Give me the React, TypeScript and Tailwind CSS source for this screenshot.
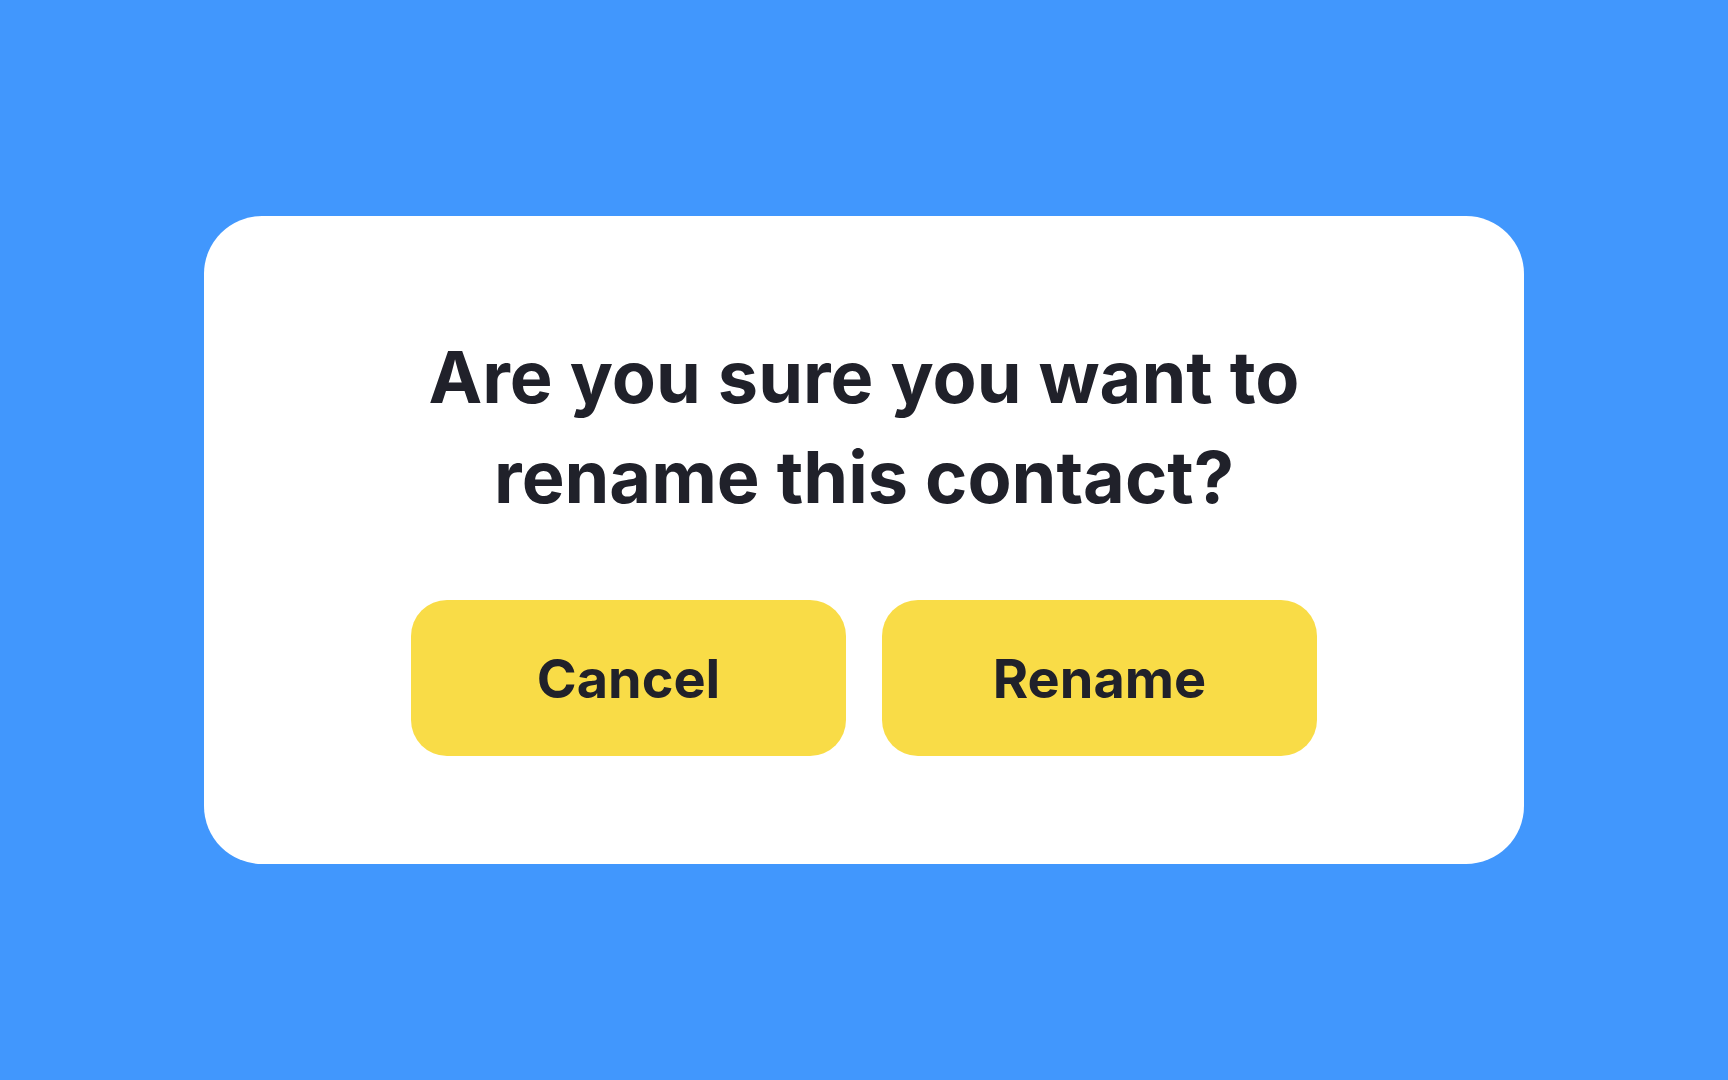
export default function App() {
  return (
    <div className="w-screen h-screen bg-[#4197fd] flex items-center justify-center font-['Inter',sans-serif]">
      <div className="w-[1320px] h-[648px] bg-white rounded-[58px] flex flex-col items-center pt-[111px]">
        <h2 className="max-w-[960px] text-center text-[72px] leading-[100px] font-bold text-[#20212a]">
          Are you sure you want to rename this contact?
        </h2>

        <div className="flex gap-[36px] mt-[73px]">
          <button className="w-[435px] h-[156px] rounded-[36px] bg-[#f9dc47] text-[54px] font-bold text-[#20212a]">
            Cancel
          </button>
          <button className="w-[435px] h-[156px] rounded-[36px] bg-[#f9dc47] text-[54px] font-bold text-[#20212a]">
            Rename
          </button>
        </div>
      </div>
    </div>
  );
}
